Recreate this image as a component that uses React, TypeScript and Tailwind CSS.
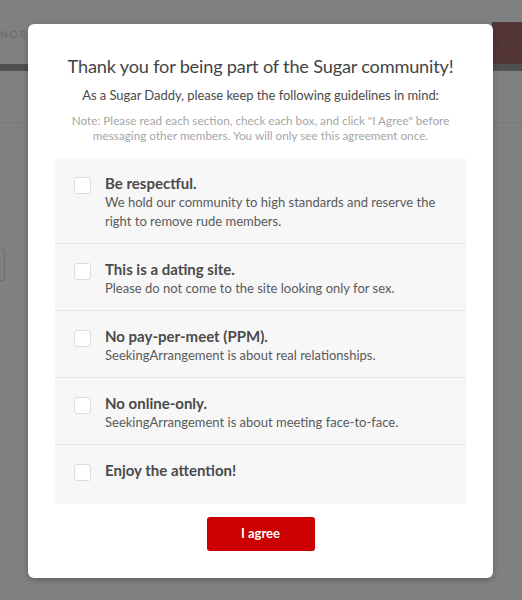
import { useState } from "react";

type Guideline = {
  title: string;
  body?: string;
};

const guidelines: Guideline[] = [
  {
    title: "Be respectful.",
    body: "We hold our community to high standards and reserve the right to remove rude members.",
  },
  {
    title: "This is a dating site.",
    body: "Please do not come to the site looking only for sex.",
  },
  {
    title: "No pay-per-meet (PPM).",
    body: "SeekingArrangement is about real relationships.",
  },
  {
    title: "No online-only.",
    body: "SeekingArrangement is about meeting face-to-face.",
  },
  { title: "Enjoy the attention!" },
];

function GuidelineRow({
  item,
  checked,
  onToggle,
  last,
}: {
  item: Guideline;
  checked: boolean;
  onToggle: () => void;
  last: boolean;
}) {
  return (
    <label
      className={`flex cursor-pointer gap-[14px] pl-[19px] pr-6 pt-[15px] ${
        last ? "pb-[22px]" : "pb-3 border-b border-[#e6e6e6]"
      }`}
    >
      <span className="pt-[4px]">
        <input
          type="checkbox"
          checked={checked}
          onChange={onToggle}
          className="sr-only"
        />
        <span
          className={`block h-[17px] w-[17px] rounded-[3px] border ${
            checked ? "border-[#cc0000] bg-[#cc0000]" : "border-[#dcdcdc] bg-white"
          }`}
        />
      </span>
      <span className="flex flex-col">
        <span className="text-[15px] leading-[20px] font-bold text-[#4a4a4a]">{item.title}</span>
        {item.body && (
          <span className="text-[13px] leading-[19px] text-[#5a5a5a]">{item.body}</span>
        )}
      </span>
    </label>
  );
}

export default function App() {
  const [checked, setChecked] = useState<boolean[]>(guidelines.map(() => false));

  return (
    <div
      className="relative h-[600px] w-[522px] overflow-hidden bg-[#808080]"
      style={{ fontFamily: "Lato, 'Open Sans', sans-serif" }}
    >
      {/* page behind the overlay */}
      <div className="pt-[22px]">
        <div className="flex h-[42px] items-start justify-between">
          <div className="pt-[5px] text-[10px] tracking-[2px] text-[#6a6a6a]">NORT</div>
          <div
            className="h-full w-[30px]"
            style={{
              background:
                "repeating-conic-gradient(from 0deg at 100% 100%, #4e3636 0deg 3deg, #573434 3deg 6deg)",
            }}
          />
        </div>
        <div className="h-[7px] bg-[#4f4f4f]" />
        <div className="h-[52px] border-b border-[#777777]" />
        <div className="mt-[126px] h-[32px] w-[5px] rounded-r-[2px] border border-l-0 border-[#6e6e6e]" />
      </div>

      {/* agreement dialog */}
      <div className="absolute left-[28px] top-[24px] w-[465px] rounded-[6px] bg-white px-[27px] pb-[27px] pt-[29px] shadow-[0_2px_6px_rgba(0,0,0,0.25)]">
        <h2 className="whitespace-nowrap text-center text-[18.2px] leading-[26px] tracking-[-0.2px] text-[#444444]">
          Thank you for being part of the Sugar community!
        </h2>
        <p className="mt-[7px] text-center text-[13px] leading-[18px] tracking-[-0.05px] text-[#4a4a4a]">
          As a Sugar Daddy, please keep the following guidelines in mind:
        </p>
        <p className="mx-auto mt-[9px] w-[392px] text-center text-[11.75px] leading-[15px] text-[#a6a6a6]">
          Note: Please read each section, check each box, and click "I Agree" before messaging
          other members. You will only see this agreement once.
        </p>

        <div className="mt-[15px] rounded-[3px] bg-[#f7f7f7] shadow-[0_1px_1px_rgba(0,0,0,0.06)]">
          {guidelines.map((g, i) => (
            <GuidelineRow
              key={g.title}
              item={g}
              checked={checked[i]}
              last={i === guidelines.length - 1}
              onToggle={() =>
                setChecked((prev) => prev.map((v, j) => (j === i ? !v : v)))
              }
            />
          ))}
        </div>

        <div className="mt-[14px] flex justify-center">
          <button className="h-[34px] w-[108px] rounded-[3px] bg-[#cc0000] text-[13px] font-bold text-white">
            I agree
          </button>
        </div>
      </div>
    </div>
  );
}
